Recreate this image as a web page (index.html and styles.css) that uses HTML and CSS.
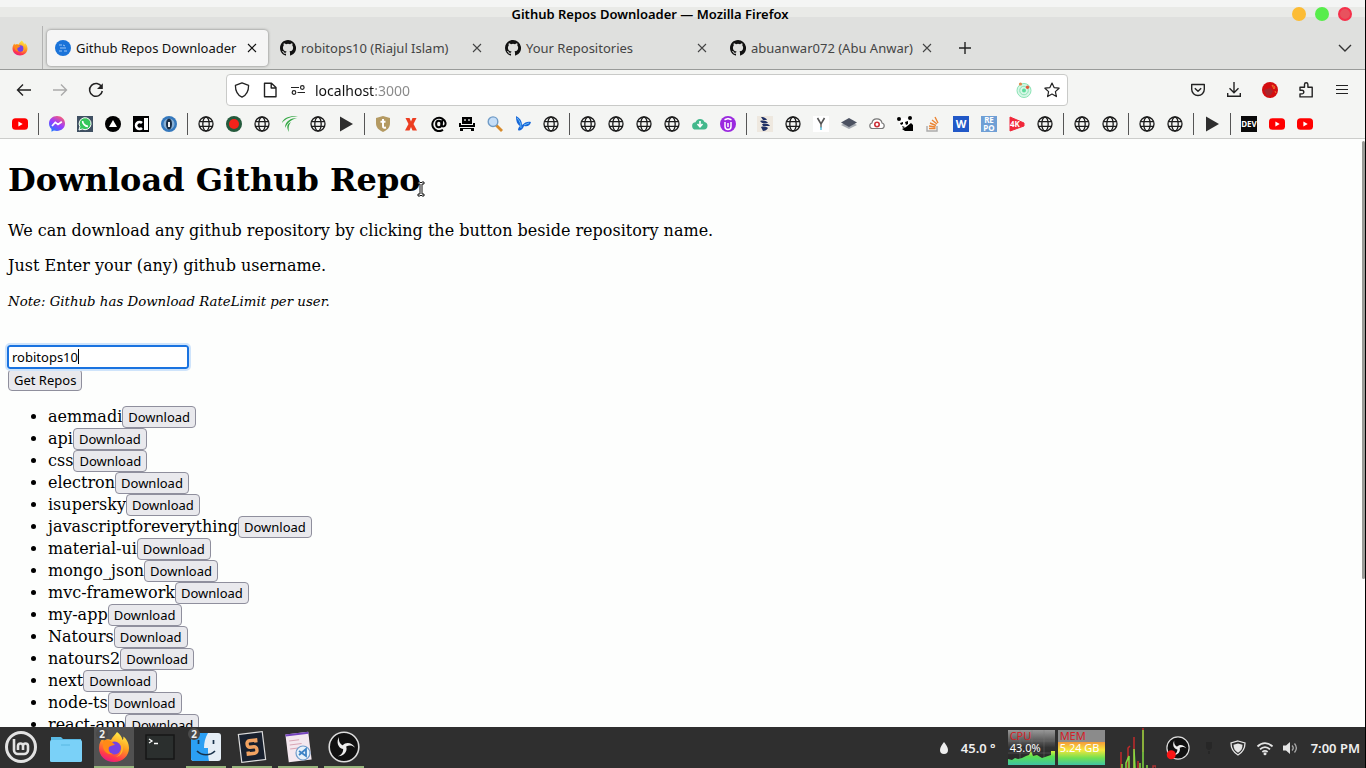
FILE: index.html
```html
<!DOCTYPE html>
<html lang="en">
<head>
<meta charset="utf-8">
<title>Github Repos Downloader</title>
<link rel="stylesheet" href="styles.css">
</head>
<body>
<svg class="defs" aria-hidden="true">
  <defs>
    <linearGradient id="gFire" x1="0.7" y1="0" x2="0.3" y2="1"><stop offset="0" stop-color="#fff14a"/><stop offset=".45" stop-color="#ff9a1f"/><stop offset=".8" stop-color="#ff3a4a"/><stop offset="1" stop-color="#e5188a"/></linearGradient>
    <linearGradient id="gMsg" x1="0.2" y1="1" x2="0.8" y2="0"><stop offset="0" stop-color="#1a7cff"/><stop offset=".5" stop-color="#9b3cff"/><stop offset="1" stop-color="#ff5f6d"/></linearGradient>
    <linearGradient id="gCpu" x1="0" y1="0" x2="0" y2="1"><stop offset="0" stop-color="#999"/><stop offset=".5" stop-color="#333"/><stop offset="1" stop-color="#222"/></linearGradient>
    <linearGradient id="gMem" x1="0" y1="0" x2="0" y2="1"><stop offset="0" stop-color="#f39a3a"/><stop offset=".35" stop-color="#f6e63a"/><stop offset=".7" stop-color="#6fe052"/><stop offset="1" stop-color="#3fc3a5"/></linearGradient>
    <linearGradient id="gGreen" x1="0" y1="0" x2="0" y2="1"><stop offset="0" stop-color="#d8ee3a"/><stop offset=".4" stop-color="#58e052"/><stop offset="1" stop-color="#3fc3a5"/></linearGradient>
    <symbol id="globe" viewBox="0 0 16 16"><g fill="none" stroke="#1c1c1c" stroke-width="1.300"><circle cx="8" cy="8" r="7"/><ellipse cx="8" cy="8" rx="3.200" ry="7"/><path d="M1.500 5.600h13M1.500 10.400h13"/></g></symbol>
    <symbol id="close" viewBox="0 0 10 10"><path d="M1 1l8 8M9 1l-8 8" stroke="currentColor" stroke-width="1.100" fill="none"/></symbol>
    <symbol id="github" viewBox="0 0 16 16"><path fill="#111" d="M8 0C3.58 0 0 3.58 0 8c0 3.54 2.29 6.53 5.47 7.59.4.07.55-.17.55-.38v-1.49c-2.01.37-2.53-.49-2.69-.94-.09-.23-.48-.94-.82-1.13-.28-.15-.68-.52-.01-.53.63-.01 1.08.58 1.23.82.72 1.21 1.87.87 2.33.66.07-.52.28-.87.51-1.07-1.78-.2-3.64-.89-3.64-3.95 0-.87.31-1.59.82-2.15-.08-.2-.36-1.02.08-2.12 0 0 .67-.21 2.2.82a7.4 7.4 0 0 1 4 0c1.53-1.04 2.2-.82 2.2-.82.44 1.1.16 1.92.08 2.12.51.56.82 1.27.82 2.15 0 3.07-1.87 3.75-3.65 3.95.29.25.54.73.54 1.48v2.2c0 .21.15.46.55.38A8 8 0 0 0 8 0z"/></symbol>
    <symbol id="youtube" viewBox="0 0 16 16"><rect y="2.300" width="16" height="11.400" rx="3.500" fill="#f00"/><path d="M6.400 5.500v5l4.300-2.500z" fill="#fff"/></symbol>
    <symbol id="play" viewBox="0 0 16 16"><path d="M2 .5v15L15 8z" fill="#2e2e2e"/></symbol>
    <symbol id="firefox" viewBox="0 0 32 32"><path fill="url(#gFire)" d="M19 1c3 2 5 5 5.500 8 1-1 1-2 .8-3.500C29 8 31 13 31 17c0 8-6.500 14-15 14S1 25 1 17c0-5 2-8 4-10l1 3c2-2 5-2 7-1 2-4 4-5 6-8z"/><circle cx="16.500" cy="17" r="6.500" fill="#7542e5"/><path fill="#ff8a16" d="M5 10c3-2 7-1 9 1l3 3c-3 0-4 1-6 2-1 3 0 6 4 7-5 1-9-2-10-7z"/><path fill="#ffb82a" d="M23 12c4 6 1 13-5 14 6-3 6-8 5-14z"/></symbol>
    <symbol id="obs" viewBox="0 0 32 32"><circle cx="16" cy="16" r="14.800" fill="#111" stroke="#ddd" stroke-width="1.600"/><g fill="#eee"><path d="M18 15c-4 0-8-3-7-9-3 5-1 11 4 12z"/><path d="M18 15c-4 0-8-3-7-9-3 5-1 11 4 12z" transform="rotate(120 16 16)"/><path d="M18 15c-4 0-8-3-7-9-3 5-1 11 4 12z" transform="rotate(240 16 16)"/></g></symbol>
  </defs>
</svg>

<header class="titlebar">
  <div class="window-title">Github Repos Downloader — Mozilla Firefox</div>
  <div class="window-controls">
    <button class="dot amber" aria-label="Minimize"></button>
    <button class="dot green" aria-label="Maximize"></button>
    <button class="dot red" aria-label="Close window"></button>
  </div>
</header>

<div class="tabbar">
  <button class="view" aria-label="Firefox View"><svg class="i16"><use href="#firefox"/></svg></button>
  <div class="tab active">
    <svg class="i16" viewBox="0 0 16 16"><circle cx="8" cy="8" r="8" fill="#1a73d9"/><path d="M4 5h3M5 8h6M4 11h3M9 11h3M8 5l2 1" stroke="#9cc6f5" stroke-width="1" fill="none"/></svg>
    <button class="tab-label">Github Repos Downloader</button>
    <button class="tab-close" aria-label="Close tab"><svg><use href="#close"/></svg></button>
  </div>
  <div class="tab">
    <svg class="i16"><use href="#github"/></svg>
    <button class="tab-label">robitops10 (Riajul Islam)</button>
    <button class="tab-close" aria-label="Close tab"><svg><use href="#close"/></svg></button>
  </div>
  <div class="tab">
    <svg class="i16"><use href="#github"/></svg>
    <button class="tab-label">Your Repositories</button>
    <button class="tab-close" aria-label="Close tab"><svg><use href="#close"/></svg></button>
  </div>
  <div class="tab">
    <svg class="i16"><use href="#github"/></svg>
    <button class="tab-label">abuanwar072 (Abu Anwar)</button>
    <button class="tab-close" aria-label="Close tab"><svg><use href="#close"/></svg></button>
  </div>
  <button class="tool" aria-label="New tab"><svg class="i16" viewBox="0 0 16 16"><path d="M8 2v12M2 8h12" stroke="#222" stroke-width="1.400"/></svg></button>
  <button class="tool list-tabs" aria-label="List all tabs"><svg class="i16" viewBox="0 0 16 16"><path d="M2 5l6 6 6-6" stroke="#333" stroke-width="1.400" fill="none"/></svg></button>
</div>

<nav class="navbar">
  <button class="tool" aria-label="Back"><svg class="i16" viewBox="0 0 16 16"><path d="M15 8H1.500M7 2.500L1.500 8 7 13.500" stroke="#222" stroke-width="1.400" fill="none"/></svg></button>
  <button class="tool" aria-label="Forward"><svg class="i16" viewBox="0 0 16 16"><path d="M1 8h13.500M9 2.500L14.500 8 9 13.500" stroke="#aaa" stroke-width="1.400" fill="none"/></svg></button>
  <button class="tool" aria-label="Reload"><svg class="i16" viewBox="0 0 16 16"><path d="M13.700 5A6.400 6.400 0 1 0 14.300 9" stroke="#222" stroke-width="1.500" fill="none"/><path d="M14.800 1.200V7H9z" fill="#222"/></svg></button>
  <div class="urlbar">
    <svg class="i16" viewBox="0 0 16 16"><path d="M8 .8l6.600 2.600C14.600 9 12.500 13 8 15.200 3.500 13 1.400 9 1.400 3.400z" stroke="#222" stroke-width="1.300" fill="none" stroke-linejoin="round"/></svg>
    <svg class="i16" viewBox="0 0 16 16"><path d="M2.500 1.200h7L14 5.500v9.300H2.500zM9.200 1.500V6H14" stroke="#222" stroke-width="1.400" fill="none" stroke-linejoin="round"/></svg>
    <svg class="i16" viewBox="0 0 16 16"><g stroke="#222" stroke-width="1.200" fill="none"><path d="M1 5.500h8M7.500 10.500H15"/><circle cx="12.300" cy="5.500" r="1.800"/><circle cx="4" cy="10.500" r="1.800"/></g></svg>
    <input class="url" type="text" aria-label="Address" value="localhost:3000">
    <svg class="i16" viewBox="0 0 16 16"><circle cx="8" cy="8.500" r="7" fill="#d6f7e6"/><g fill="none" stroke="#8be3b5"><circle cx="8" cy="8.500" r="7"/><circle cx="8" cy="8.500" r="4.300"/></g><circle cx="8" cy="8.500" r="2" fill="#5fdc9c"/><circle cx="4.500" cy="2" r="1.600" fill="#e08a4a"/><circle cx="11.500" cy="5.300" r="1.700" fill="#e0583a"/></svg>
    <svg class="i16" viewBox="0 0 16 16"><path d="M8 1l2.100 4.600 5 .6-3.700 3.400 1 5L8 12.100l-4.400 2.500 1-5L.9 6.200l5-.6z" stroke="#222" stroke-width="1.200" fill="none" stroke-linejoin="round"/></svg>
  </div>
  <button class="tool" aria-label="Save to Pocket"><svg class="i16" viewBox="0 0 16 16"><path d="M1.700 2.500h12.600v4.700a6.300 6.300 0 0 1-12.600 0zM4.800 6.200L8 9.200l3.200-3" stroke="#222" stroke-width="1.400" fill="none" stroke-linejoin="round"/></svg></button>
  <button class="tool" aria-label="Downloads"><svg class="i16" viewBox="0 0 16 16"><path d="M8 0v10.500M3.500 6.300L8 10.700l4.500-4.400M1.700 11v3.300h12.600V11" stroke="#222" stroke-width="1.400" fill="none"/></svg></button>
  <button class="tool" aria-label="Extension"><svg class="i16" viewBox="0 0 16 16"><circle cx="8" cy="8" r="8" fill="#d40d10"/><path d="M2 8l6-2 3 3-2 4-4 1z" fill="#a8262c"/><path d="M10 3l3 2-1 2zM13 9l1 2" stroke="#f0702a" fill="none"/></svg></button>
  <button class="tool" aria-label="Extensions"><svg class="i16" viewBox="0 0 16 16"><path d="M2 5.200h4.500V2.500a1.700 1.700 0 0 1 3.400 0v2.700h4.300v9.700H2v-3h2a1.800 1.800 0 0 0 0-3.600H2z" stroke="#222" stroke-width="1.400" fill="none" stroke-linejoin="round"/></svg></button>
  <button class="tool" aria-label="Menu"><svg class="i16" viewBox="0 0 16 16"><path d="M2 3.500h12M2 7.500h12M2 11.500h12" stroke="#222" stroke-width="1.200"/></svg></button>
</nav>

<nav class="bookmarks" aria-label="Bookmarks">
  <a href="#"><svg><use href="#youtube"/></svg></a>
  <i class="sep"></i>
  <a href="#"><svg viewBox="0 0 16 16"><path fill="url(#gMsg)" d="M8 0C3.400 0 0 3.300 0 7.500c0 2.300 1 4.200 2.500 5.500v2.700l2.400-1.200c1 .3 2 .4 3.100.4 4.600 0 8-3.200 8-7.400S12.600 0 8 0z"/><path d="M3 10l3.300-3.600L9 8.500l3.800-2.700" stroke="#fff" stroke-width="1.700" fill="none"/></svg></a>
  <a href="#"><svg viewBox="0 0 16 16"><path fill="#3f5062" d="M0 0h16v16H0z"/><path d="M2 14l.9-3.300A6 6 0 1 1 5.300 13z" fill="#35c65a" stroke="#fff"/><path d="M5.700 5c-.4 2.500 2.700 5.500 5.200 5.200" stroke="#fff" stroke-width="1.800" fill="none"/></svg></a>
  <a href="#"><svg viewBox="0 0 16 16"><circle cx="8" cy="8" r="8"/><path d="M8 4l4 7H4z" fill="#fff"/></svg></a>
  <a href="#"><svg viewBox="0 0 16 16"><path d="M0 0h16v16H0z"/><path d="M9 7a3.500 3.500 0 1 0 0 5" fill="none" stroke="#fff" stroke-width="2.600"/><path d="M11 2h4v12h-4z" fill="#fff"/></svg></a>
  <a href="#"><svg viewBox="0 0 16 16"><circle cx="8" cy="8" r="8" fill="#3478bd"/><circle cx="8" cy="8" r="5.500" fill="#87afd4"/><ellipse cx="8" cy="8" rx="3" ry="5.500" fill="#172c45"/><path d="M7 6h2v5H7z" fill="#f1f1f1"/></svg></a>
  <i class="sep"></i>
  <a href="#"><svg><use href="#globe"/></svg></a>
  <a href="#"><svg viewBox="0 0 16 16"><circle cx="8" cy="8" r="8" fill="#245a3c"/><circle cx="8" cy="8" r="5" fill="#f3221b"/></svg></a>
  <a href="#"><svg><use href="#globe"/></svg></a>
  <a href="#"><svg viewBox="0 0 16 16"><path d="M16 0C8-.5 1 2 0 7c4-5 9-6 16-7zM15 2C9 2 3 5 3 12c3-6 6-8 12-10zM9 6c-4 2-5 5-2 10-1-5 0-7 2-10z" fill="#35a845"/></svg></a>
  <a href="#"><svg><use href="#globe"/></svg></a>
  <a href="#"><svg><use href="#play"/></svg></a>
  <i class="sep"></i>
  <a href="#"><svg viewBox="0 0 16 16"><path d="M8 0l7 2v5c0 5-3 7-7 9-4-2-7-4-7-9V2z" fill="#b49a62"/><path d="M8 3v7c0 2 1 2 3 1.500M5.500 5.800h5" stroke="#fff" stroke-width="2" fill="none"/></svg></a>
  <a href="#"><svg viewBox="0 0 16 16"><path d="M2.500 2h4L8 5.500 9.500 2h4l-3 6 3.500 6.500H9.500L8 11l-1.500 3.500H2L5.500 8z" fill="#ec3d20"/></svg></a>
  <a href="#"><svg viewBox="0 0 16 16"><g fill="none" stroke="#000" stroke-width="2"><path d="M12 13.800A6.700 6.700 0 1 1 14.600 7c0 4.500-4.300 4-3.900 1.500L11.400 4"/><ellipse cx="7.800" cy="8" rx="2.700" ry="3.200"/></g></svg></a>
  <a href="#"><svg viewBox="0 0 16 16"><path d="M3 1h10v7H3zM0 7h2v2h12V7h2v4H0zM1 12h14v1H1zM1 12h3v3H1zM12 12h3v3h-3z"/><path d="M5 3h2v2H5zM9 3h2v2H9z" fill="#999"/></svg></a>
  <a href="#"><svg viewBox="0 0 16 16"><path d="M9 9l6 6" stroke="#d78b2c" stroke-width="2.800"/><circle cx="6" cy="5.700" r="4.800" fill="#c5def8" stroke="#6f9bc6" stroke-width="1.400"/></svg></a>
  <a href="#"><svg viewBox="0 0 16 16"><path d="M1 0c4 2 6 5 6 9 3-3 6-4 9-3-1 4-4 5-7 4-2 5-5 5-6 4 0-2 1-3 2-4C2 8 1 5 1 0z" fill="#1767d9"/><path d="M2 2c3 3 4 6 4 10M9 9l5-2" stroke="#69bbf5" fill="none"/></svg></a>
  <a href="#"><svg><use href="#globe"/></svg></a>
  <i class="sep"></i>
  <a href="#"><svg><use href="#globe"/></svg></a>
  <a href="#"><svg><use href="#globe"/></svg></a>
  <a href="#"><svg><use href="#globe"/></svg></a>
  <a href="#"><svg><use href="#globe"/></svg></a>
  <a href="#"><svg viewBox="0 0 16 16"><path d="M4 13.500a3.600 3.600 0 0 1-.5-7.200 4.800 4.800 0 0 1 9-.3A3.800 3.800 0 0 1 12 13.500z" fill="#43b88c"/><path d="M8 5v5M5.500 8L8 10.800 10.500 8" stroke="#fff" stroke-width="1.600" fill="none"/></svg></a>
  <a href="#"><svg viewBox="0 0 16 16"><circle cx="8" cy="8" r="8" fill="#9a29df"/><path d="M5 6v4.500a3 3 0 0 0 6 0V6M8 11V7M4.500 3.800L8 2.500l3.500 1.300" stroke="#fff" stroke-width="1.500" fill="none"/></svg></a>
  <i class="sep"></i>
  <a href="#"><svg viewBox="0 0 16 16"><path d="M0 0h16v16H0z" fill="#eee8df"/><path d="M4 1c3 0 5 1 6 3H6zM3 5c4-1 7 0 8 2H5zM5 8c4-1 7 0 8 2H6zM4 11c3-1 6 0 7 1-1 2-3 3-5 3z" fill="#203064"/></svg></a>
  <a href="#"><svg><use href="#globe"/></svg></a>
  <a href="#"><svg viewBox="0 0 16 16"><path d="M0 0h16v16H0z" fill="#fff"/><path d="M4.500 2L8 8l3.500-6" stroke="#555" stroke-width="1.600" fill="none"/><path d="M8 8v4" stroke="#777" stroke-width="1.600"/><path d="M8 11v3" stroke="#65c3e0" stroke-width="1.600"/></svg></a>
  <a href="#"><svg viewBox="0 0 16 16"><path d="M0 9l8-4 8 4-8 4z" fill="#a5aab1"/><path d="M0 6.500L8 2l8 4.500-8 4.500z" fill="#4c5261"/></svg></a>
  <a href="#"><svg viewBox="0 0 16 16"><path d="M3.500 12.500C0 12.500 0 7.500 3 7c.5-5.500 9-5.500 10 0 3 .5 3 5.500-.5 5.500z" fill="#fff" stroke="#777" stroke-width="1.200"/><circle cx="8" cy="8.500" r="2.200" fill="none" stroke="#cc3038" stroke-width="1.600"/></svg></a>
  <a href="#"><svg viewBox="0 0 16 16"><path d="M2 4c3-3 8-3 10 1l2 8-5 2-6-3z" fill="#fff"/><circle cx="2" cy="3" r="2"/><circle cx="13" cy="2" r="2"/><path d="M3 7l3-1v2L4 9zM8 6l3-1v3L9 9zM5 10l3 1-2 1zM9 11l5-4 2 2v6H8l-3-2z"/></svg></a>
  <a href="#"><svg viewBox="0 0 16 16"><path d="M2 10v5h10v-5" stroke="#aaa" stroke-width="1.400" fill="none"/><path d="M4 12.500h6.500M4 10l6.500 1M5 7l6 2.500M7 4l5 4M10 1l3 6" stroke="#eb8432" stroke-width="1.400"/></svg></a>
  <a href="#"><svg viewBox="0 0 16 16"><path d="M0 0h16v16H0z" fill="#2158c7"/><text x="8" y="12" class="glyph word">W</text></svg></a>
  <a href="#"><svg viewBox="0 0 16 16"><path d="M0 0h16v16H0z" fill="#6f9fd5"/><text x="8" y="7" class="glyph repo">RE</text><text x="8" y="15" class="glyph repo">PO</text></svg></a>
  <a href="#"><svg viewBox="0 0 16 16"><path d="M1 1l14 6v3L1 15z" fill="#f0283a" stroke="#f0283a" stroke-linejoin="round"/><text x="6" y="11" class="glyph repo">4K</text></svg></a>
  <a href="#"><svg><use href="#globe"/></svg></a>
  <i class="sep"></i>
  <a href="#"><svg><use href="#globe"/></svg></a>
  <a href="#"><svg><use href="#globe"/></svg></a>
  <i class="sep"></i>
  <a href="#"><svg><use href="#globe"/></svg></a>
  <a href="#"><svg><use href="#globe"/></svg></a>
  <i class="sep"></i>
  <a href="#"><svg><use href="#play"/></svg></a>
  <i class="sep"></i>
  <a href="#"><svg viewBox="0 0 16 16"><path d="M0 0h16v16H0z" fill="#0a0a0a"/><text x="8" y="11" class="glyph dev">DEV</text></svg></a>
  <a href="#"><svg><use href="#youtube"/></svg></a>
  <a href="#"><svg><use href="#youtube"/></svg></a>
</nav>

<main class="page">
  <h1>Download Github Repo<svg class="pointer" viewBox="0 0 8 16"><path d="M1 1h2l1 1 1-1h2v2H5v10h2v2H5l-1-1-1 1H1v-2h2V3H1z" stroke="#111" fill="#fff"/></svg></h1>
  <p>We can download any github repository by clicking the button beside repository name.</p>
  <p>Just Enter your (any) github username.</p>
  <p class="note"><small>Note: Github has Download RateLimit per user.</small></p>
  <form class="search">
    <div class="field"><input type="text" aria-label="Github username" value="robitops10"><span class="caret"></span></div>
    <button type="button" class="push">Get Repos</button>
  </form>
  <ul>
    <li>aemmadi<button class="push">Download</button></li>
    <li>api<button class="push">Download</button></li>
    <li>css<button class="push">Download</button></li>
    <li>electron<button class="push">Download</button></li>
    <li>isupersky<button class="push">Download</button></li>
    <li>javascriptforeverything<button class="push">Download</button></li>
    <li>material-ui<button class="push">Download</button></li>
    <li>mongo_json<button class="push">Download</button></li>
    <li>mvc-framework<button class="push">Download</button></li>
    <li>my-app<button class="push">Download</button></li>
    <li>Natours<button class="push">Download</button></li>
    <li>natours2<button class="push">Download</button></li>
    <li>next<button class="push">Download</button></li>
    <li>node-ts<button class="push">Download</button></li>
    <li>react-app<button class="push">Download</button></li>
  </ul>
  <span class="scroll-thumb"></span>
</main>

<footer class="taskbar">
  <div class="launchers">
    <button class="app" aria-label="Menu"><svg viewBox="0 0 32 32"><circle cx="16" cy="16" r="14.500" fill="#2f2f2f" stroke="#e2e2e2" stroke-width="3"/><path d="M9 8v11a4 4 0 0 0 4 4h6a4 4 0 0 0 4-4v-4a2.500 2.500 0 0 0-5 0v4M18 15a2.500 2.500 0 0 0-5 0v4" stroke="#e2e2e2" stroke-width="2.600" fill="none"/></svg></button>
    <button class="app" aria-label="Files"><svg viewBox="0 0 32 32"><path d="M1 6h10l2 2h18v6H1z" fill="#59b8e2"/><rect x="0" y="9" width="32" height="22" rx="1.500" fill="#7ad1f8"/><path d="M11 14h9" stroke="#59b8e2"/></svg></button>
  </div>
  <div class="windows">
    <button class="app open current" aria-label="Firefox"><svg viewBox="0 0 32 32"><use href="#firefox"/></svg><span class="count">2</span></button>
    <button class="app" aria-label="Terminal"><svg viewBox="0 0 32 32"><rect x="2" y="4" width="28" height="24" fill="#2b2f2e" stroke="#171717" stroke-width="1.500"/><path d="M5 8l3 2-3 2M10 12.500h4" stroke="#fff" stroke-width="1.300" fill="none"/></svg></button>
    <button class="app open" aria-label="Finder"><svg viewBox="0 0 32 32"><rect x="1" y="2" width="30" height="28" rx="3" fill="#e5eef6"/><path d="M4 2h14c-3 5-4 10-4 15h4c0 5 0 9 1 13H4a3 3 0 0 1-3-3V5a3 3 0 0 1 3-3z" fill="#2b9ff3"/><path d="M8.500 9v4M23.500 9v4M7 20c5 5 13 5 18 0" stroke="#17314a" stroke-width="1.700" fill="none"/></svg><span class="count">2</span></button>
    <button class="app open" aria-label="Sublime Text"><svg viewBox="0 0 32 32"><g transform="rotate(-7 16 16)"><rect x="4" y="2" width="24" height="28" fill="#18202e" stroke="#ddd" stroke-width="1.200"/><path d="M20.500 12V9.500H14a2.500 2.500 0 0 0-2.500 2.500v1.500A2.500 2.500 0 0 0 14 16h4a2.500 2.500 0 0 1 2.500 2.500V20a2.500 2.500 0 0 1-2.500 2.500h-6.500V20" stroke="#f0a262" stroke-width="3.400" fill="none"/></g></svg></button>
    <button class="app open" aria-label="Code"><svg viewBox="0 0 32 32"><g transform="rotate(-7 16 16)"><rect x="5" y="2" width="23" height="28" fill="#f4e8ef"/><path d="M5 2h23v2H5z" fill="#7544be"/><path d="M8 9h10M8 13h12M8 17h8" stroke="#d8a5b4"/></g><circle cx="21" cy="22" r="7" fill="#e7f1fa" stroke="#6f9ccb" stroke-width="1.200"/><path d="M17 20l7 5V18l-7 6" stroke="#3c83c6" stroke-width="1.800" fill="none"/></svg></button>
    <button class="app open" aria-label="OBS"><svg><use href="#obs"/></svg></button>
  </div>
  <div class="status">
    <svg class="drop" viewBox="0 0 10 14"><path d="M5 1c2 3 4 5 4 8a4 4 0 0 1-8 0c0-3 2-5 4-8z" fill="#eee"/></svg>
    <span class="temp">45.0 °</span>
    <div class="meters">
      <div class="meter"><svg viewBox="0 0 47 35"><path d="M0 0h47v35H0z" fill="url(#gCpu)"/><path d="M0 11h47M0 23h47M12 0v35M24 0v35M36 0v35" stroke="#777" stroke-opacity=".4"/><path d="M0 35v-6l4 1 3-2 3 1 4-1 4-2 3-1 2-4 2 5 4-1 5 3 6-2 3-1v-4h4v14z" fill="url(#gGreen)"/></svg><span class="meter-name">CPU</span><span class="meter-value">43.0%</span></div>
      <div class="meter"><svg viewBox="0 0 47 35"><path d="M0 0h47v35H0z" fill="#8b8b8b"/><path d="M0 12h47v23H0z" fill="url(#gMem)"/></svg><span class="meter-name">MEM</span><span class="meter-value">5.24 GB</span></div>
    </div>
    <svg class="graph" viewBox="0 0 36 41"><g fill="none" stroke-width="1.500"><path d="M1 41V25M8 41V21l2-2M14 41V10M18 41v-7M23 25V1" stroke="#c12b2b"/><path d="M2 41v-4M6 41v-5l3-7v12M14 41V22l1 19M20 41v-5M23 41V3M27 41v-3" stroke="#84dc42"/><path d="M33 41v-2h3v2" stroke="#a33"/></g></svg>
    <svg class="tray-obs" viewBox="0 0 32 32"><use href="#obs"/><circle cx="7" cy="25" r="6" fill="#fa1616"/></svg>
    <svg class="lamp" viewBox="0 0 8 16"><path d="M1 2h6v6L5 10H3L1 8zM3 11h2v3H3z" fill="#272727"/></svg>
    <svg class="i16 shield" viewBox="0 0 16 16"><path d="M8 1l7 2c0 6-2 9-7 12C3 12 1 9 1 3z" fill="none" stroke="#e5e5e5" stroke-width="1.300"/><path d="M8 3.500l4.500 1.300C12.500 9 11 11 8 12.700 5 11 3.500 9 3.500 4.800z" fill="#e5e5e5"/></svg>
    <svg class="wifi" viewBox="0 0 18 16"><g fill="none" stroke="#e5e5e5" stroke-width="1.800"><path d="M1.500 6.500c4.500-4.500 10.500-4.500 15 0M4 9.300c3-3 7-3 10 0M6.400 12c1.800-1.600 3.400-1.600 5.200 0"/></g><circle cx="9" cy="13.700" r="1.500" fill="#e5e5e5"/></svg>
    <svg class="i16 volume" viewBox="0 0 16 16"><path d="M1 5.500h3L8 2v12l-4-3.500H1z" fill="#e5e5e5"/><path d="M10 5.500c1.500 1.500 1.500 3.500 0 5M12.500 3.500c2.500 3 2.500 6 0 9" stroke="#aaa" stroke-width="1.300" fill="none"/></svg>
    <span class="clock">7:00 PM</span>
  </div>
</footer>
</body>
</html>
```
FILE: styles.css
```css
* { box-sizing: border-box; }

body {
  display: flex;
  flex-direction: column;
  height: 100vh;
  margin: 0;
  overflow: hidden;
  border-right: 1px solid #000;
  background: #fdfefd;
  color: #000;
  font-family: "Noto Sans", "Open Sans", sans-serif;
  font-size: 13px;
}

button, input { font: inherit; color: inherit; }
button { padding: 0; border: 0; background: none; }
svg { display: block; flex: none; }
.defs { position: absolute; width: 0; height: 0; }
.i16 { width: 16px; height: 16px; }

.titlebar {
  display: flex;
  flex: none;
  align-items: center;
  height: 26px;
  padding: 2px 13px 0 8px;
  background: linear-gradient(#f4f5f4 7px, #e9eae7 7px, #e9eae7 17px, #dfe0de 17px);
}
.window-title { flex: 1; text-align: center; font-weight: 600; }
.window-controls { display: flex; gap: 9px; }
.dot { width: 14px; height: 14px; border-radius: 50%; }
.amber { background: #fcbc35; }
.green { background: #57ed4b; }
.red { border: 2px solid #f5304a; background: #e8525e; }

.tabbar {
  display: flex;
  flex: none;
  align-items: center;
  height: 44px;
  padding-right: 2px;
  border-bottom: 1px solid #999b99;
  background: #dfe0de;
}
.view {
  display: flex;
  align-items: center;
  align-self: stretch;
  width: 43px;
  margin-right: 4px;
  padding-left: 12px;
  border-right: 1px solid #b3b3b2;
}
.tab {
  display: flex;
  align-items: center;
  width: 221px;
  height: 36px;
  margin-right: 4px;
  padding: 0 11px 0 8px;
  border-radius: 4px;
  color: #444;
}
.tab.active { background: #f5f5f5; color: #111; box-shadow: 0 0 3px #777; }
.tab-label { flex: 1; padding-left: 5px; overflow: hidden; text-align: left; white-space: nowrap; }
.tab-close svg { width: 10px; height: 10px; }
.tool { display: flex; flex: none; align-items: center; justify-content: center; width: 36px; height: 32px; }
.list-tabs { margin-left: auto; }

.navbar {
  display: flex;
  flex: none;
  align-items: center;
  height: 41px;
  padding: 0 5px 1px 6px;
  background: #f4f5f3;
}
.urlbar {
  display: flex;
  flex: 1;
  align-items: center;
  gap: 12px;
  height: 32px;
  margin: 0 112px;
  padding: 0 7px;
  border: 1px solid #c9cac8;
  border-radius: 4px;
  background: #fff;
}
.url {
  flex: 1;
  min-width: 0;
  margin-left: -3px;
  padding: 0;
  border: 0;
  outline: 0;
  background: linear-gradient(90deg, #111 59px, #888 59px);
  background-clip: text;
  -webkit-background-clip: text;
  -webkit-text-fill-color: transparent;
  font-size: 14px;
}

.bookmarks {
  display: flex;
  flex: none;
  align-items: center;
  height: 28px;
  padding: 0 0 2px 6px;
  border-bottom: 1px solid #cccdcb;
  background: #f4f5f3;
}
.bookmarks a { display: flex; flex: none; justify-content: center; width: 28px; }
.bookmarks svg { width: 16px; height: 16px; }
.sep { flex: none; width: 1px; height: 22px; margin: 0 4px; background: #555; }
.glyph { fill: #fff; font-weight: 700; text-anchor: middle; }
.repo { font-size: 8px; }
.dev { font-size: 8px; }
.word { font-size: 11px; }

.page {
  position: relative;
  flex: 1;
  min-height: 0;
  padding: 22px 8px 0;
  overflow: hidden;
  font-family: "DejaVu Serif", serif;
  font-size: 16px;
  line-height: 19px;
}
.page h1 { position: relative; width: fit-content; margin: 0 0 22px; font-size: 32px; line-height: 38px; }
.pointer { position: absolute; right: -4px; bottom: 2px; width: 8px; height: 16px; }
.page p { margin: 0 0 16px; }
.page .note { margin-bottom: 34px; font-style: italic; }
.search { font-family: "Noto Sans", "Open Sans", sans-serif; font-size: 13px; }
.field { position: relative; width: 182px; margin-left: -1px; }
.field input {
  display: block;
  width: 100%;
  height: 24px;
  padding: 0 3px;
  border: 2px solid #1a73e0;
  border-radius: 3px;
  outline: 2px solid #cfe4fb;
  background: #fff;
}
.caret { position: absolute; top: 4px; left: 71px; width: 1px; height: 15px; background: #000; }
.push {
  height: 22px;
  padding: 0 5px;
  border: 1px solid #8f8f9d;
  border-radius: 4px;
  background: #e9e9ed;
  font-family: "Noto Sans", "Open Sans", sans-serif;
  font-size: 13px;
  line-height: 18px;
}
.search .push { display: block; }
.page ul { margin: 15px 0 0; padding-left: 40px; }
.page li { height: 22px; line-height: 22px; }
.page li .push { vertical-align: top; }
.scroll-thumb { position: absolute; top: 2px; right: 0; width: 3px; height: 438px; border-radius: 2px; background: #999a96; }

.taskbar { display: flex; flex: none; height: 41px; background: #2f2f2f; color: #eee; }
.launchers, .windows { display: flex; flex: none; }
.launchers { gap: 5px; padding-left: 1px; }
.windows { gap: 6px; margin-left: 8px; }
.app {
  position: relative;
  display: flex;
  align-items: center;
  justify-content: center;
  width: 40px;
  border-bottom: 2px solid transparent;
}
.app svg { width: 32px; height: 32px; }
.open { border-color: #96b47c; }
.current { background: #515151; }
.count {
  position: absolute;
  top: 1px;
  left: 2px;
  width: 12px;
  height: 12px;
  border-radius: 50%;
  background: #4a4a4a;
  font-size: 10px;
  font-weight: 700;
  line-height: 12px;
}
.status { display: flex; align-items: center; margin-left: auto; padding-right: 5px; font-weight: 600; }
.drop { width: 10px; height: 14px; margin-right: 12px; }
.meters { display: flex; gap: 3px; margin: 0 15px 0 12px; }
.meter { position: relative; width: 47px; height: 35px; overflow: hidden; font-size: 11px; font-weight: 400; line-height: 12px; }
.meter svg { width: 47px; height: 35px; }
.meter-name, .meter-value { position: absolute; left: 2px; white-space: nowrap; }
.meter-name { top: 0; color: #d32026; }
.meter-value { top: 12px; color: #fff; }
.graph { width: 36px; height: 41px; margin-right: 10px; }
.tray-obs { width: 24px; height: 24px; margin-right: 15px; }
.lamp { width: 8px; height: 16px; margin-right: 17px; }
.shield { margin-right: 10px; }
.wifi { width: 18px; height: 16px; margin-right: 8px; }
.volume { margin-right: 13px; }
```
